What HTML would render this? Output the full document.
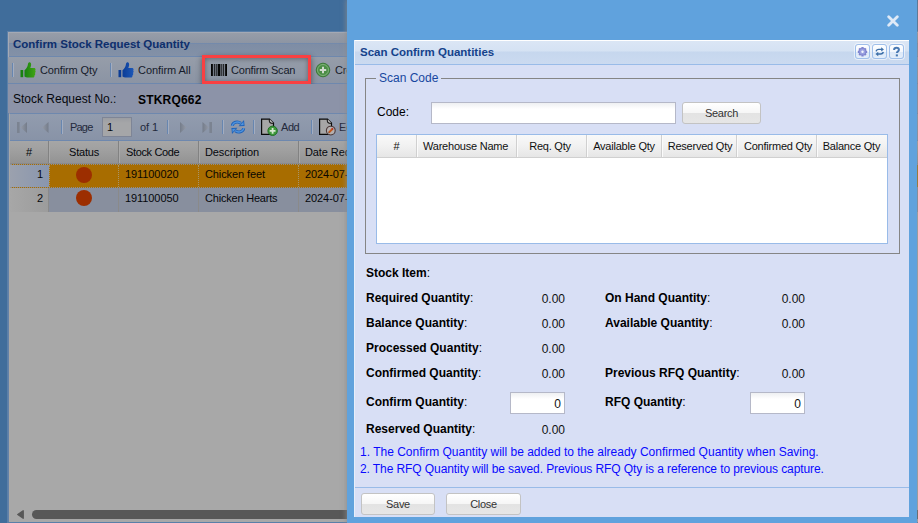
<!DOCTYPE html>
<html>
<head>
<meta charset="utf-8">
<title>Scan Confirm Quantities</title>
<style>
*{box-sizing:border-box;margin:0;padding:0}
html,body{width:918px;height:523px;overflow:hidden}
body{position:relative;background:#406d9b;font-family:"Liberation Sans",sans-serif;font-size:12px;color:#000}
.abs{position:absolute}
.t{position:absolute;white-space:nowrap;line-height:1}
/* ---------- left masked panel ---------- */
#lp{position:absolute;left:7px;top:31px;width:913px;height:492px;background:#6482a8;border-left:1px solid #5a7fa8;border-top:1px solid #5a7fa8}
#lpi{position:absolute;left:1px;top:0;width:912px;height:491px;background:#a8a8a8}
#lp-title{position:absolute;left:0;top:0;width:100%;height:25px;background:linear-gradient(#979da8 0,#8d95a3 10px,#748aab 10px,#748aab 11px,#7e8da5 11px,#8391a7 100%);border-top:1px solid #a4a9b4;border-bottom:1px solid #6e88ae}
#lp-tb{position:absolute;left:0;top:25px;width:100%;height:27px;background:linear-gradient(#969da9,#8b94a4);border-bottom:1px solid #6e88ae}
#lp-form{position:absolute;left:0;top:52px;width:100%;height:30px;background:#8c93a8}
#lp-pg{position:absolute;left:1px;top:81px;width:100%;height:28px;background:linear-gradient(#929cae,#8893a7);border-top:1px solid #6e88ae;border-bottom:1px solid #6e88ae}
#lp-hd{position:absolute;left:1px;top:109px;width:100%;height:23px;background:linear-gradient(#a6a6a6 0,#a0a0a0 40%,#939393 100%);border-bottom:1px solid #8a8a8a}
.hsep{position:absolute;top:0;width:2px;height:22px;border-left:1px solid #828282;border-right:1px solid #a9a9a9}
.row{position:absolute;left:1px;width:100%;height:24px}
.csep{position:absolute;top:0;width:1px;height:100%;background:#8a8a8a}
.dot{position:absolute;width:16px;height:16px;border-radius:50%;background:#9c2e00}
.tbsep{position:absolute;width:2px;height:14px;border-left:1px solid #6786b0;border-right:1px solid #a3adc0}
.lt{color:#161b2b}
/* ---------- overlay ---------- */
#ov{position:absolute;left:347px;top:0;width:570px;height:523px;background:#60a2dd;box-shadow:0 0 5px 1px rgba(140,140,140,.75)}
#win{position:absolute;left:7px;top:40px;width:555px;height:477px;background:#d8dff5;border-left:1px solid #e6eefa}
#wh{position:absolute;left:0;top:0;width:100%;height:25px;background:linear-gradient(#ffffff 0,#ffffff 1px,#dbe6f5 1px,#d5e2f3 11px,#c6d7ee 12px,#cbdaf0 100%);border-bottom:1px solid #99bbe8}
.tool{position:absolute;top:4px;width:15px;height:15px;border:1px solid #9fbfea;border-radius:3px;background:linear-gradient(#fdfeff 0,#f4f8fd 50%,#dbe8f8 51%,#e4eefa 100%);box-shadow:0 0 0 1px rgba(255,255,255,.55)}
#fs{position:absolute;left:10px;top:38px;width:535px;height:176px;border:1px solid #858585;}
#lg{position:absolute;left:21px;top:31px;height:14px;padding:0 3px;background:#d8dff5;color:#1747a0;font-size:12px;line-height:14px}
.inp{position:absolute;background:linear-gradient(#eef0f2 0,#ffffff 6px,#fff 100%);border:1px solid #b5b8c8}
.btn{position:absolute;height:22px;border:1px solid #c3c3c3;border-radius:3px;background:linear-gradient(#ffffff 0,#f6f6f6 48%,#e3e3e3 52%,#e6e6e6 100%);color:#333;font-size:11px;letter-spacing:-.3px;text-align:center;line-height:20px}
#grid{position:absolute;left:21px;top:94px;width:512px;height:110px;background:#fff;border:1px solid #99bbe8}
#gh{position:absolute;left:0;top:0;width:100%;height:23px;background:linear-gradient(#f9f9f9 0,#f1f1f1 50%,#e6e6e6 100%);border-bottom:1px solid #d0d0d0}
.gsep{position:absolute;top:0;width:2px;height:22px;border-left:1px solid #d0d0d0;border-right:1px solid #fbfbfb}
.gt{position:absolute;top:4px;font-size:11px;letter-spacing:-.22px;line-height:14px;color:#111;white-space:nowrap;text-align:center}
.lb{position:absolute;font-size:12px;line-height:14px;font-weight:bold;white-space:nowrap;color:#000}
.lb i{font-style:normal;font-weight:normal}
.val{position:absolute;font-size:12px;line-height:14px;white-space:nowrap;text-align:right;color:#111}
.note{position:absolute;left:5px;font-size:12px;line-height:14px;color:#0a0aff;white-space:nowrap}
#wf{position:absolute;left:0;top:447px;width:100%;height:30px;border-top:1px solid #99bbe8}
</style>
</head>
<body>

<!-- ================= LEFT MASKED PANEL ================= -->
<div id="lp"><div id="lpi">
  <div class="abs" style="left:-1px;top:0;width:1px;height:25px;background:#a4a9b4"></div>
  <div class="abs" style="left:-1px;top:25px;width:1px;height:27px;background:linear-gradient(#969da9,#8b94a4);border-bottom:1px solid #6e88ae"></div>
  <div class="abs" style="left:-1px;top:52px;width:1px;height:29px;background:#8c93a8"></div>
  <div id="lp-title"><span class="t" id="t-title" style="left:4px;top:6px;font-size:11.5px;font-weight:bold;color:#0f2f6b">Confirm Stock Request Quantity</span></div>
  <div id="lp-tb">
    <div class="tbsep" style="left:3px;top:6px"></div>
    <svg class="abs" style="left:11px;top:5px" width="17" height="17" viewBox="0 0 17 17"><defs><linearGradient id="gg" x1="0" y1="0" x2="1" y2="0"><stop offset="0" stop-color="#17820e"/><stop offset="1" stop-color="#43a516"/></linearGradient></defs><path d="M.5 8h2.700v7.200H.5z" fill="#17820e"/><path d="M4.500 8.200C6.500 7 7.600 4.600 8 2 8.200.3 10-.2 10.800 1c.8 1.300 0 3.600-.5 5H14c1.600 0 1.900 1.600 1.200 2.400.7.800.5 2.100-.2 2.600.5.900.2 2-.6 2.500.3 1.100-.4 2.100-1.600 2.100H7.500c-1.200 0-2.100-.4-3-1z" fill="url(#gg)"/></svg>
    <span class="t lt" id="t-cq" style="left:31px;top:8px;font-size:11px;letter-spacing:-.12px">Confirm Qty</span>
    <div class="tbsep" style="left:101px;top:6px"></div>
    <svg class="abs" style="left:109px;top:5px" width="17" height="17" viewBox="0 0 17 17"><defs><linearGradient id="gb" x1="0" y1="0" x2="1" y2="0"><stop offset="0" stop-color="#0b3c96"/><stop offset="1" stop-color="#1d58b8"/></linearGradient></defs><path d="M.5 8h2.700v7.200H.5z" fill="#0b3c96"/><path d="M4.500 8.200C6.500 7 7.600 4.600 8 2 8.200.3 10-.2 10.800 1c.8 1.300 0 3.600-.5 5H14c1.600 0 1.900 1.600 1.200 2.400.7.800.5 2.100-.2 2.600.5.900.2 2-.6 2.500.3 1.100-.4 2.100-1.600 2.100H7.500c-1.200 0-2.100-.4-3-1z" fill="url(#gb)"/></svg>
    <span class="t lt" id="t-ca" style="left:129px;top:8px;font-size:11px;letter-spacing:-.06px">Confirm All</span>
    <!-- barcode -->
    <svg class="abs" style="left:202px;top:7px" width="16" height="12" viewBox="0 0 17 13" preserveAspectRatio="none"><g fill="#050505"><rect x="0" y="0" width="2" height="13"/><rect x="3" y="0" width="1" height="13"/><rect x="5" y="0" width="1" height="13"/><rect x="7" y="0" width="3" height="13"/><rect x="11" y="0" width="1" height="13"/><rect x="13" y="0" width="1" height="13"/><rect x="15" y="0" width="2" height="13"/></g></svg>
    <span class="t lt" id="t-cs" style="left:222px;top:8px;font-size:11px;letter-spacing:-.2px">Confirm Scan</span>
    <svg class="abs" style="left:306px;top:5px" width="16" height="16" viewBox="0 0 16 16"><circle cx="8" cy="8" r="6.800" fill="#4b8d46" stroke="#3c7a39" stroke-width="1"/><circle cx="8" cy="8" r="5.500" fill="none" stroke="#86b680" stroke-width=".9"/><path d="M8 4.800v6.400M4.800 8h6.400" stroke="#cfd9cc" stroke-width="2"/></svg>
    <span class="t lt" style="left:326px;top:8px;font-size:11px;letter-spacing:-.2px">Create</span>
  </div>
  <!-- red highlight -->
  <div class="abs" style="left:193px;top:23px;width:109px;height:29px;border:3px solid #f94042;box-shadow:0 2px 6px rgba(0,0,0,.45),inset 0 1px 5px rgba(0,0,0,.35)"></div>

  <div id="lp-form">
    <span class="t" id="t-srn" style="left:4px;top:9px;font-size:12px;color:#05070c">Stock Request No.:</span>
    <span class="t" id="t-stk" style="left:129px;top:10px;font-size:12px;letter-spacing:.19px;font-weight:bold;color:#000">STKRQ662</span>
  </div>

  <div id="lp-pg">
    <svg class="abs" style="left:7px;top:8px" width="12" height="11" viewBox="0 0 12 11"><defs><linearGradient id="pg1" x1="0" x2="1" y1="0" y2="0"><stop offset="0" stop-color="#959ba8"/><stop offset="1" stop-color="#747c8a"/></linearGradient></defs><rect x="0" y="0" width="2.600" height="11" fill="#7b8391"/><path d="M10 0v11L3.500 5.500z" fill="url(#pg1)"/></svg>
    <svg class="abs" style="left:32px;top:8px" width="8" height="11" viewBox="0 0 8 11"><path d="M6.500 0v11L0 5.500z" fill="url(#pg1)"/></svg>
    <div class="tbsep" style="left:51px;top:6px"></div>
    <span class="t" id="t-page" style="left:60px;top:8px;font-size:11px;letter-spacing:-.8px;color:#23293c">Page</span>
    <div class="abs" style="left:92px;top:3px;width:30px;height:20px;background:linear-gradient(#9b9da2 0,#a5a6a8 5px);border:1px solid #7e8596"></div>
    <span class="t" style="left:97px;top:8px;font-size:11px;color:#05070c">1</span>
    <span class="t" id="t-of" style="left:130px;top:8px;font-size:11px;letter-spacing:-.08px;color:#23293c">of 1</span>
    <div class="tbsep" style="left:157px;top:6px"></div>
    <svg class="abs" style="left:170px;top:8px" width="8" height="11" viewBox="0 0 8 11"><defs><linearGradient id="pg2" x1="0" x2="1" y1="0" y2="0"><stop offset="0" stop-color="#747c8a"/><stop offset="1" stop-color="#959ba8"/></linearGradient></defs><path d="M0 0v11l6.500-5.500z" fill="url(#pg2)"/></svg>
    <svg class="abs" style="left:192px;top:8px" width="12" height="11" viewBox="0 0 12 11"><path d="M.5 0v11L7 5.500z" fill="url(#pg2)"/><rect x="7.400" y="0" width="2.600" height="11" fill="#7b8391"/></svg>
    <div class="tbsep" style="left:212px;top:6px"></div>
    <!-- refresh -->
    <svg class="abs" style="left:220px;top:5px" width="16" height="16" viewBox="0 0 16 16"><g fill="none" stroke-linecap="butt"><path d="M2.300 6.800C2.800 3.200 7.500 1.800 10.800 4.300" stroke="#1f62b8" stroke-width="3"/><path d="M13.700 9.200C13.200 12.800 8.500 14.200 5.200 11.700" stroke="#1f62b8" stroke-width="3"/><path d="M2.300 6.800C2.800 3.200 7.500 1.800 10.800 4.300" stroke="#4f93de" stroke-width="1.300"/><path d="M13.700 9.200C13.200 12.800 8.500 14.200 5.200 11.700" stroke="#4f93de" stroke-width="1.300"/></g><path d="M8.600 7.300l6-.4-.6-6z" fill="#1f62b8"/><path d="M7.400 8.700l-6 .4.600 6z" fill="#1f62b8"/><path d="M10.300 6.300l3.400-.3-.4-3.300z" fill="#4f93de"/><path d="M5.700 9.700l-3.400.3.400 3.300z" fill="#4f93de"/></svg>
    <div class="tbsep" style="left:243px;top:6px"></div>
    <!-- add page -->
    <svg class="abs" style="left:250px;top:4px" width="19" height="19" viewBox="0 0 19 19"><path d="M1.600 1.100h7.900l4 4v11.300H1.600z" fill="#a6a6a6" stroke="#0a0a0a" stroke-width="1.200"/><path d="M9.500 1.100c-.6 1.700.2 3.600 1.300 4 .9.300 2 .2 2.700 0" fill="#b4b4b4" stroke="#0a0a0a" stroke-width="1.100"/><circle cx="12.600" cy="12.800" r="4.700" fill="#3f9a3c" stroke="#1f6f24" stroke-width="1"/><path d="M12.600 9.900v5.800M9.700 12.800h5.800" stroke="#d6e6d0" stroke-width="1.800"/></svg>
    <span class="t" id="t-add" style="left:271px;top:8px;font-size:11px;letter-spacing:-.45px;color:#23293c">Add</span>
    <div class="tbsep" style="left:301px;top:6px"></div>
    <svg class="abs" style="left:308px;top:4px" width="19" height="19" viewBox="0 0 19 19"><path d="M1.600 1.100h7.900l4 4v11.300H1.600z" fill="#a6a6a6" stroke="#0a0a0a" stroke-width="1.200"/><path d="M9.500 1.100c-.6 1.700.2 3.600 1.300 4 .9.300 2 .2 2.700 0" fill="#b4b4b4" stroke="#0a0a0a" stroke-width="1.100"/><circle cx="12.800" cy="12.600" r="4.400" fill="#b4b0b0" stroke="#4d3a3a" stroke-width="1.100"/><path d="M10.800 14.600l3.600-3.600" stroke="#c2571c" stroke-width="2"/><path d="M14 11.400l1-1" stroke="#b52a1a" stroke-width="2"/><path d="M10.300 15.100l.9-.3-.6-.6z" fill="#222"/></svg>
    <span class="t" style="left:329px;top:8px;font-size:11px;color:#23293c">Edit</span>
  </div>

  <div id="lp-hd">
    <span class="t" style="left:16px;top:6px;font-size:11px;letter-spacing:-.2px;color:#05070c">#</span>
    <div class="hsep" style="left:38px"></div>
    <span class="t" id="t-status" style="left:59px;top:6px;font-size:11px;letter-spacing:-.2px;color:#05070c">Status</span>
    <div class="hsep" style="left:108px"></div>
    <span class="t" id="t-sc" style="left:116px;top:6px;font-size:11px;letter-spacing:-.36px;color:#05070c">Stock Code</span>
    <div class="hsep" style="left:188px"></div>
    <span class="t" id="t-desc" style="left:195px;top:6px;font-size:11px;letter-spacing:-.1px;color:#05070c">Description</span>
    <div class="hsep" style="left:288px"></div>
    <span class="t" style="left:295px;top:6px;font-size:11px;letter-spacing:-.1px;color:#05070c">Date Required</span>
  </div>

  <!-- row 1 (selected) -->
  <div class="row" style="top:132px;background:#a86d00;border-top:1px dotted #8f8f8f;border-bottom:1px dotted #8f8f8f">
    <div class="abs" style="left:0;top:0;width:39px;height:100%;background:linear-gradient(90deg,#9ba1ae,#8996ae)"></div>
    <span class="t" style="left:27px;top:4px;font-size:11px;letter-spacing:-.2px;color:#05070c">1</span>
    <div class="dot" style="left:66px;top:2px"></div>
    <div class="abs" style="left:39px;top:0;width:0;height:22px;border-left:1px dotted #a89468"></div><div class="abs" style="left:108px;top:0;width:0;height:22px;border-left:1px dotted #a89468"></div><div class="abs" style="left:188px;top:0;width:0;height:22px;border-left:1px dotted #a89468"></div><div class="abs" style="left:288px;top:0;width:0;height:22px;border-left:1px dotted #a89468"></div>
    <span class="t" style="left:115px;top:4px;font-size:11px;letter-spacing:-.08px;color:#0a0700">191100020</span>
    <span class="t" style="left:195px;top:4px;font-size:11px;letter-spacing:-.1px;color:#0a0700">Chicken feet</span>
    <span class="t" style="left:295px;top:4px;font-size:11px;letter-spacing:-.08px;color:#0a0700">2024-07-18</span>
  </div>
  <!-- row 2 -->
  <div class="row" style="top:156px;background:#888f9e;">
    <div class="abs" style="left:0;top:0;width:39px;height:100%;background:linear-gradient(90deg,#a7a7a7,#9c9c9c);border-right:1px solid #8a8a8a"></div>
    <span class="t" style="left:27px;top:5px;font-size:11px;letter-spacing:-.2px;color:#05070c">2</span>
    <div class="dot" style="left:66px;top:2px"></div>
    <div class="csep" style="left:108px"></div><div class="csep" style="left:188px"></div><div class="csep" style="left:288px"></div>
    <span class="t" style="left:115px;top:5px;font-size:11px;letter-spacing:-.08px;color:#05070c">191100050</span>
    <span class="t" style="left:195px;top:5px;font-size:11px;letter-spacing:-.2px;color:#05070c">Chicken Hearts</span>
    <span class="t" style="left:295px;top:5px;font-size:11px;letter-spacing:-.08px;color:#05070c">2024-07-18</span>
  </div>

  <!-- scrollbar -->
  <svg class="abs" style="left:8px;top:478px" width="7" height="9" viewBox="0 0 7 9"><path d="M6.200.8v7.400L.8 4.500z" fill="#585858" stroke="#585858" stroke-linejoin="round" stroke-width="1.400"/></svg>
  <div class="abs" style="left:23px;top:478px;width:900px;height:9px;border-radius:4.500px;background:#585858"></div>
  <div class="abs" style="left:-1px;top:490px;width:100%;height:1px;background:#5a7fa8"></div>
</div></div>

<!-- ================= OVERLAY ================= -->
<div id="ov">
  <svg class="abs" style="left:540px;top:15px" width="12" height="12" viewBox="0 0 12 12"><path d="M1.700 1.700l8.600 8.600M10.300 1.700l-8.600 8.600" stroke="#dfeaf7" stroke-width="2.800" stroke-linecap="round"/></svg>
  <div id="win">
    <div id="wh">
      <span class="t" id="t-wt" style="left:5px;top:7px;font-size:11.5px;font-weight:bold;color:#15428b">Scan Confirm Quantities</span>
      <div class="tool" style="left:500px"><svg width="13" height="13" viewBox="0 0 13 13" style="display:block"><g transform="translate(6.500 6.700)"><g fill="#7f84cf"><rect x="-1.200" y="-4.700" width="2.400" height="9.400" rx=".5"/><rect x="-1.200" y="-4.700" width="2.400" height="9.400" rx=".5" transform="rotate(45)"/><rect x="-1.200" y="-4.700" width="2.400" height="9.400" rx=".5" transform="rotate(90)"/><rect x="-1.200" y="-4.700" width="2.400" height="9.400" rx=".5" transform="rotate(135)"/><circle r="3.600"/></g><circle r="2.900" fill="#9aa0df"/><circle r="1.200" fill="#f3f5fd"/></g></svg></div>
      <div class="tool" style="left:517px"><svg width="13" height="13" viewBox="0 0 13 13" style="display:block"><g transform="translate(6.700 6.700) scale(.82) translate(-6.500 -6.500)"><g fill="none" stroke="#3d6fa8" stroke-width="1.700"><path d="M2.200 6.200c.2-1.700 1.500-2.500 3.200-2.500h3.800"/><path d="M10.800 6.800c-.2 1.700-1.500 2.500-3.200 2.500H3.800"/></g><path d="M8.300 1l3.400 2.700-3.400 2.700z" fill="#3d6fa8"/><path d="M4.700 6.600L1.300 9.300l3.400 2.700z" fill="#3d6fa8"/></g></svg></div>
      <div class="tool" style="left:534px"><svg width="13" height="13" viewBox="0 0 13 13" style="display:block"><path d="M4.100 5c0-1.600 1-2.300 2.400-2.300s2.400.7 2.400 2c0 1-.5 1.400-1.200 1.900-.6.400-.8.700-.8 1.500" fill="none" stroke="#4878b2" stroke-width="2"/><rect x="5.800" y="9.400" width="2.100" height="2" fill="#4878b2"/></svg></div>
    </div>
    <div id="fs"></div>
    <div id="lg"><span id="t-lg">Scan Code</span></div>
    <span class="t" id="t-code" style="left:22px;top:66px;font-size:12px">Code:</span>
    <div class="inp" style="left:76px;top:62px;width:245px;height:22px"></div>
    <div class="btn" id="b-search" style="left:327px;top:62px;width:79px">Search</div>
    <div id="grid">
      <div id="gh">
        <span class="gt" style="left:0;width:39px">#</span><div class="gsep" style="left:39px"></div>
        <span class="gt" style="left:46px">Warehouse Name</span><div class="gsep" style="left:139px"></div>
        <span class="gt" style="left:139px;width:68px">Req. Qty</span><div class="gsep" style="left:209px"></div>
        <span class="gt" style="left:210.500px;width:73px">Available Qty</span><div class="gsep" style="left:284px"></div>
        <span class="gt" style="left:286.500px;width:73px">Reserved Qty</span><div class="gsep" style="left:359px"></div>
        <span class="gt" style="left:362px;width:78px">Confirmed Qty</span><div class="gsep" style="left:439px"></div>
        <span class="gt" style="left:440px;width:69px">Balance Qty</span>
      </div>
    </div>

    <span class="lb" style="left:11px;top:226px">Stock Item<i>:</i></span>
    <span class="lb" style="left:11px;top:251px">Required Quantity<i>:</i></span>
    <span class="lb" style="left:11px;top:276px">Balance Quantity<i>:</i></span>
    <span class="lb" style="left:11px;top:301px">Processed Quantity<i>:</i></span>
    <span class="lb" style="left:11px;top:326px">Confirmed Quantity<i>:</i></span>
    <span class="lb" style="left:11px;top:355px">Confirm Quantity<i>:</i></span>
    <span class="lb" style="left:11px;top:382px">Reserved Quantity<i>:</i></span>
    <span class="val" style="left:160px;width:50px;top:252px">0.00</span>
    <span class="val" style="left:160px;width:50px;top:277px">0.00</span>
    <span class="val" style="left:160px;width:50px;top:302px">0.00</span>
    <span class="val" style="left:160px;width:50px;top:327px">0.00</span>
    <span class="val" style="left:160px;width:50px;top:383px">0.00</span>
    <div class="inp" style="left:155px;top:352px;width:55px;height:22px"></div>
    <span class="val" style="left:155px;width:51px;top:357px">0</span>

    <span class="lb" style="left:250px;top:251px">On Hand Quantity<i>:</i></span>
    <span class="lb" style="left:250px;top:276px">Available Quantity<i>:</i></span>
    <span class="lb" style="left:250px;top:326px">Previous RFQ Quantity<i>:</i></span>
    <span class="lb" style="left:250px;top:355px">RFQ Quantity<i>:</i></span>
    <span class="val" style="left:400px;width:50px;top:252px">0.00</span>
    <span class="val" style="left:400px;width:50px;top:277px">0.00</span>
    <span class="val" style="left:400px;width:50px;top:327px">0.00</span>
    <div class="inp" style="left:395px;top:352px;width:55px;height:22px"></div>
    <span class="val" style="left:395px;width:51px;top:357px">0</span>

    <span class="note" id="n1" style="top:405px">1. The Confirm Quantity will be added to the already Confirmed Quantity when Saving.</span>
    <span class="note" id="n2" style="top:422px;letter-spacing:-.086px">2. The RFQ Quantity will be saved. Previous RFQ Qty is a reference to previous capture.</span>

    <div id="wf">
      <div class="btn" style="left:6px;top:5px;width:74px">Save</div>
      <div class="btn" style="left:91px;top:5px;width:75px">Close</div>
    </div>
  </div>
</div>
</body>
</html>
